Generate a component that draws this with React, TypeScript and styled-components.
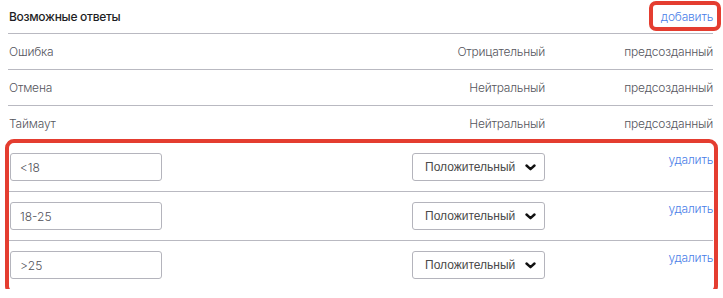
import React from "react";
import styled, { createGlobalStyle } from "styled-components";

const GlobalStyle = createGlobalStyle`
  body {
    margin: 0;
    background: #ffffff;
    font-family: Inter, "Noto Sans", sans-serif;
  }
`;

const Panel = styled.section`
  width: 705px;
  padding: 0 0 0 8px;
  box-sizing: content-box;
`;

const Header = styled.div`
  height: 33px;
  display: flex;
  align-items: center;
  justify-content: space-between;
  border-bottom: 1px solid #b9b9c1;
`;

const Title = styled.h3`
  margin: 0 0 0 1px;
  font-size: 12px;
  font-weight: 500;
  letter-spacing: -0.3px;
  color: #1e1e24;
`;

const Highlight = styled.div<{ $inset: string; $radius: number }>`
  position: relative;
  &::after {
    content: "";
    position: absolute;
    inset: ${(p) => p.$inset};
    border: 4px solid #e43d30;
    border-radius: ${(p) => p.$radius}px;
    pointer-events: none;
  }
`;

const LinkButton = styled.a`
  display: block;
  font-size: 12px;
  font-weight: 300;
  letter-spacing: -0.2px;
  color: #4a80e8;
  text-decoration: none;
  cursor: pointer;
  line-height: 16px;
`;

const Row = styled.div`
  display: grid;
  grid-template-columns: 1fr 160px 168px;
  align-items: center;
  height: 35px;
  border-bottom: 1px solid #b9b9c1;
  font-size: 12px;
  font-weight: 300;
  letter-spacing: -0.2px;
  color: #55555d;
`;

const Cell = styled.div<{ $right?: boolean }>`
  padding-left: ${(p) => (p.$right ? 0 : "1px")};
  text-align: ${(p) => (p.$right ? "right" : "left")};
`;

const EditRow = styled.div`
  display: grid;
  grid-template-columns: 1fr 160px 168px;
  align-items: start;
  padding: 10px 0;
  border-bottom: 1px solid #b9b9c1;
  &:first-child {
    padding-top: 11px;
  }
  &:last-child {
    border-bottom: none;
  }
`;

const TextInput = styled.input`
  margin-left: 2px;
  width: 152px;
  height: 28px;
  box-sizing: border-box;
  border: 1px solid #b4b4bc;
  border-radius: 3px;
  padding: 0 9px;
  font-family: Inter, "Noto Sans", sans-serif;
  font-size: 12px;
  font-weight: 300;
  color: #505058;
  outline: none;
`;

const SelectBox = styled.div`
  justify-self: end;
  width: 133px;
  height: 28px;
  box-sizing: border-box;
  border: 1px solid #b4b4bc;
  border-radius: 3px;
  display: flex;
  align-items: center;
  justify-content: space-between;
  padding: 0 8px 0 12px;
  font-family: "Liberation Sans", Arial, sans-serif;
  font-size: 12px;
  color: #4a4a4a;
`;

const RemoveCell = styled.div`
  justify-self: end;
  margin-top: -1px;
`;

const Chevron = () => (
  <svg width="11" height="7" viewBox="0 0 11 7">
    <path d="M1.5 1.5 L5.5 5.2 L9.5 1.5" fill="none" stroke="#111" strokeWidth="2.4" strokeLinecap="round" strokeLinejoin="round" />
  </svg>
);

const presets = [
  { name: "Ошибка", tone: "Отрицательный" },
  { name: "Отмена", tone: "Нейтральный" },
  { name: "Таймаут", tone: "Нейтральный" },
];

const custom = ["<18", "18-25", ">25"];

export default function App() {
  return (
    <>
      <GlobalStyle />
      <Panel>
        <Header>
          <Title>Возможные ответы</Title>
          <Highlight $inset="-8px -8px -6px -12px" $radius={7}>
            <LinkButton>добавить</LinkButton>
          </Highlight>
        </Header>
        {presets.map((p) => (
          <Row key={p.name}>
            <Cell>{p.name}</Cell>
            <Cell $right>{p.tone}</Cell>
            <Cell $right>предсозданный</Cell>
          </Row>
        ))}
        <Highlight $inset="-3px -5px -6px -3px" $radius={9}>
          {custom.map((v) => (
            <EditRow key={v}>
              <TextInput defaultValue={v} />
              <SelectBox>
                <span>Положительный</span>
                <Chevron />
              </SelectBox>
              <RemoveCell>
                <LinkButton>удалить</LinkButton>
              </RemoveCell>
            </EditRow>
          ))}
        </Highlight>
      </Panel>
    </>
  );
}
